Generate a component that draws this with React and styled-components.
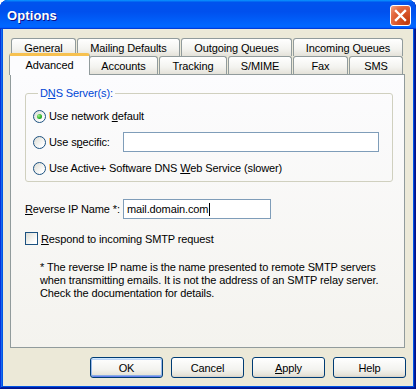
import styled, { createGlobalStyle, css } from "styled-components";

const GlobalStyle = createGlobalStyle`
  html, body {
    margin: 0;
    padding: 0;
    background: #ffffff;
  }
  * {
    box-sizing: border-box;
  }
`;

const rowOne = [
  { label: "General", w: 65 },
  { label: "Mailing Defaults", w: 103 },
  { label: "Outgoing Queues", w: 111 },
  { label: "Incoming Queues", w: 110 },
];

const rowTwo = [
  { label: "Advanced", w: 77, selected: true },
  { label: "Accounts", w: 69 },
  { label: "Tracking", w: 68 },
  { label: "S/MIME", w: 64 },
  { label: "Fax", w: 55 },
  { label: "SMS", w: 54 },
];

export default function App() {
  return (
    <>
      <GlobalStyle />
      <Window>
        <TitleBar>
          <Title>Options</Title>
          <CloseButton>
            <svg width="13" height="13" viewBox="0 0 13 13">
              <path
                d="M2 2 L11 11 M11 2 L2 11"
                stroke="#ffffff"
                strokeWidth="2.4"
                strokeLinecap="square"
              />
            </svg>
          </CloseButton>
        </TitleBar>

        <Body>
          <TabStrip>
            <TabRow>
              {rowOne.map((t) => (
                <Tab key={t.label} $w={t.w}>
                  {t.label}
                </Tab>
              ))}
            </TabRow>
            <TabRow $front>
              {rowTwo.map((t) => (
                <Tab key={t.label} $w={t.w} $selected={t.selected}>
                  {t.label}
                </Tab>
              ))}
            </TabRow>
          </TabStrip>

          <Panel>
            <Group>
              <Legend>
                D<u>N</u>S Server(s):
              </Legend>
              <RadioRow>
                <Radio $checked />
                <span>
                  Use network <u>d</u>efault
                </span>
              </RadioRow>
              <RadioRow>
                <Radio />
                <span>
                  Use s<u>p</u>ecific:
                </span>
                <Field $w={256} $push />
              </RadioRow>
              <RadioRow>
                <Radio />
                <span>
                  Use Active+ Software DNS <u>W</u>eb Service (slower)
                </span>
              </RadioRow>
            </Group>

            <FieldRow>
              <FieldLabel>
                <u>R</u>everse IP Name *:
              </FieldLabel>
              <Field $w={148}>
                mail.domain.com
                <Caret />
              </Field>
            </FieldRow>

            <CheckRow>
              <CheckBox />
              <span>
                <u>R</u>espond to incoming SMTP request
              </span>
            </CheckRow>

            <Note>
              * The reverse IP name is the name presented to remote SMTP servers
              <br />
              when transmitting emails. It is not the address of an SMTP relay server.
              <br />
              Check the documentation for details.
            </Note>
          </Panel>

          <ButtonRow>
            <Button $default>OK</Button>
            <Button>Cancel</Button>
            <Button>
              <u>A</u>pply
            </Button>
            <Button>Help</Button>
          </ButtonRow>
        </Body>
      </Window>
    </>
  );
}

const Window = styled.div`
  width: 416px;
  height: 389px;
  display: flex;
  flex-direction: column;
  background: #0055e5;
  border-radius: 8px 8px 0 0;
  box-shadow: inset -1px -1px #00138c, inset 1px 1px #0831d9,
    inset -2px -2px #001ea0, inset 2px 2px #166aee;
  font-family: "Liberation Sans", Arial, sans-serif;
  font-size: 11px;
  letter-spacing: -0.12px;
  color: #000000;
`;

const TitleBar = styled.div`
  height: 29px;
  flex: none;
  display: flex;
  align-items: center;
  justify-content: space-between;
  padding: 1px 5px 0 7px;
  border-radius: 8px 8px 0 0;
  background: linear-gradient(
    180deg,
    #0997ff,
    #0053ee 8%,
    #0050ee 40%,
    #0066ff 88%,
    #0066ff 93%,
    #005bff 95%,
    #003dd7 96%,
    #003dd7
  );
`;

const Title = styled.span`
  color: #ffffff;
  font-weight: bold;
  font-size: 13px;
  letter-spacing: 0.1px;
  text-shadow: 1px 1px #0f1089;
`;

const CloseButton = styled.div`
  width: 21px;
  height: 21px;
  border: 1px solid #ffffff;
  border-radius: 3px;
  display: flex;
  align-items: center;
  justify-content: center;
  background: radial-gradient(
    circle at 85% 85%,
    #c13a0d 0%,
    #d8552a 45%,
    #e46c43 70%,
    #f3a88c 100%
  );
`;

const Body = styled.div`
  flex: 1;
  margin: 0 3px 3px;
  background: #ece9d8;
  padding: 9px 8px 0 7px;
  display: flex;
  flex-direction: column;
`;

const TabStrip = styled.div`
  display: flex;
  flex-direction: column;
  padding-left: 1px;
`;

const TabRow = styled.div`
  display: flex;
  gap: 1px;
  height: 18px;
  align-items: flex-end;
  position: relative;
  z-index: ${(p) => (p.$front ? 2 : 1)};
`;

const Tab = styled.div`
  width: ${(p) => p.$w}px;
  height: 18px;
  flex: none;
  display: flex;
  align-items: center;
  justify-content: center;
  padding-top: 1px;
  border: 1px solid #919b9c;
  border-bottom: none;
  border-radius: 3px 3px 0 0;
  background: linear-gradient(180deg, #ffffff, #f3f3ef 60%, #e4e2d9);
  white-space: nowrap;

  ${(p) =>
    p.$selected &&
    css`
      width: ${p.$w + 4}px;
      height: 22px;
      margin: 0 -2px -1px -2px;
      align-items: flex-start;
      padding-top: 3px;
      border-top: 3px solid #f7c150;
      background: #fcfcfe;
      position: relative;
      z-index: 3;
    `}
`;

const Panel = styled.div`
  height: 274px;
  flex: none;
  border: 1px solid #919b9c;
  background: linear-gradient(180deg, #fcfcfe, #f4f3ee);
  padding: 12px 11px 0 14px;
  display: flex;
  flex-direction: column;
`;

const Group = styled.fieldset`
  margin: 0;
  padding: 6px 13px 3px 7px;
  border: 1px solid #d0d0bf;
  border-radius: 3px;
  display: flex;
  flex-direction: column;
  gap: 6px;
`;

const Legend = styled.legend`
  color: #0046d5;
  padding: 0 2px;
  margin-left: 5px;
  line-height: 13px;
`;

const RadioRow = styled.div`
  height: 20px;
  display: flex;
  align-items: center;
  gap: 3px;
`;

const Radio = styled.span`
  width: 13px;
  height: 13px;
  flex: none;
  border-radius: 50%;
  border: 1px solid #1c5180;
  background: linear-gradient(135deg, #dcdcd4, #ffffff 80%);
  display: flex;
  align-items: center;
  justify-content: center;

  &::after {
    content: "";
    width: 5px;
    height: 5px;
    border-radius: 50%;
    background: radial-gradient(circle at 35% 35%, #a9ee8b, #2bb42b 55%, #1a8a1a);
    display: ${(p) => (p.$checked ? "block" : "none")};
  }
`;

const Field = styled.div`
  width: ${(p) => p.$w}px;
  height: 20px;
  flex: none;
  border: 1px solid #7f9db9;
  background: #ffffff;
  display: flex;
  align-items: center;
  padding-left: 3px;
  margin-left: ${(p) => (p.$push ? "auto" : "0")};
`;

const Caret = styled.span`
  width: 1px;
  height: 13px;
  background: #000000;
  margin-left: 1px;
`;

const FieldRow = styled.div`
  margin-top: 17px;
  height: 20px;
  display: flex;
  align-items: center;
`;

const FieldLabel = styled.span`
  width: 98px;
  flex: none;
`;

const CheckRow = styled.div`
  margin-top: 13px;
  height: 13px;
  display: flex;
  align-items: center;
  gap: 3px;
`;

const CheckBox = styled.span`
  width: 13px;
  height: 13px;
  flex: none;
  border: 1px solid #1c5180;
  background: linear-gradient(135deg, #dcdcd4, #ffffff 80%);
`;

const Note = styled.p`
  margin: 16px 0 0;
  padding-left: 15px;
  line-height: 13px;
  white-space: nowrap;
`;

const ButtonRow = styled.div`
  display: flex;
  justify-content: flex-end;
  gap: 8px;
  margin: 9px -1px 0 0;
`;

const Button = styled.button`
  width: 73px;
  height: 21px;
  padding: 0;
  border: 1px solid #003c74;
  border-radius: 3px;
  background: linear-gradient(180deg, #ffffff, #f3f3ef 60%, #e6e3d8 90%, #d6d0c5);
  font-family: "Liberation Sans", Arial, sans-serif;
  font-size: 11px;
  letter-spacing: -0.12px;
  color: #000000;

  ${(p) =>
    p.$default &&
    css`
      box-shadow: inset 0 1px #cee7ff, inset 1px 0 #98b8ea, inset -1px 0 #98b8ea,
        inset 0 -1px #6982ee, inset 0 2px #bcd4f6, inset 0 -2px #89ade4;
    `}
`;
